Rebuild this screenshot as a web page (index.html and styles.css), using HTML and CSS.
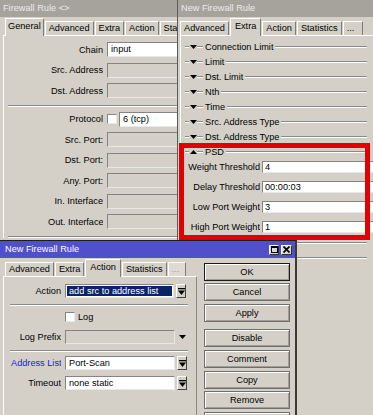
FILE: index.html
```html
<!DOCTYPE html>
<html lang="en">
<head>
    <meta charset="UTF-8">
    <meta name="viewport" content="width=device-width, initial-scale=1.0">
    <title>Firewall Rule</title>
    <link rel="stylesheet" href="styles.css">
</head>
<body>
<div class="desktop">

    <!-- Firewall Rule <> : General tab -->
    <div class="window rule-window">
        <div class="title">Firewall Rule &lt;&gt;</div>
        <div class="tabs">
            <span class="tab active">General</span>
            <span class="tab">Advanced</span>
            <span class="tab">Extra</span>
            <span class="tab">Action</span>
            <span class="tab">Statistics</span>
        </div>
        <div class="panel">
            <div class="row"><span class="label">Chain</span><span class="field white">input</span></div>
            <div class="row"><span class="label">Src. Address</span><span class="field"></span></div>
            <div class="row"><span class="label">Dst. Address</span><span class="field"></span></div>
            <div class="sep"></div>
            <div class="row"><span class="label">Protocol</span><span class="check"></span><span class="field white">6 (tcp)</span></div>
            <div class="row"><span class="label">Src. Port:</span><span class="field"></span></div>
            <div class="row"><span class="label">Dst. Port:</span><span class="field"></span></div>
            <div class="row"><span class="label">Any. Port:</span><span class="field"></span></div>
            <div class="row"><span class="label">In. Interface</span><span class="field"></span></div>
            <div class="row"><span class="label">Out. Interface</span><span class="field"></span></div>
            <div class="sep"></div>
        </div>
    </div>

    <!-- New Firewall Rule : Extra tab -->
    <div class="window extra-window">
        <div class="title">New Firewall Rule</div>
        <div class="tabs">
            <span class="tab">Advanced</span>
            <span class="tab active">Extra</span>
            <span class="tab">Action</span>
            <span class="tab">Statistics</span>
            <span class="tab more">...</span>
        </div>
        <div class="panel">
            <div class="group"><span class="dash"></span><svg class="tri" width="7" height="4" viewBox="0 0 7 4"><path d="M0 0h7L3.5 4z"/></svg><span class="dash long"></span><span class="gname">Connection Limit</span><span class="gline"></span></div>
            <div class="group"><span class="dash"></span><svg class="tri" width="7" height="4" viewBox="0 0 7 4"><path d="M0 0h7L3.5 4z"/></svg><span class="dash long"></span><span class="gname">Limit</span><span class="gline"></span></div>
            <div class="group"><span class="dash"></span><svg class="tri" width="7" height="4" viewBox="0 0 7 4"><path d="M0 0h7L3.5 4z"/></svg><span class="dash long"></span><span class="gname">Dst. Limit</span><span class="gline"></span></div>
            <div class="group"><span class="dash"></span><svg class="tri" width="7" height="4" viewBox="0 0 7 4"><path d="M0 0h7L3.5 4z"/></svg><span class="dash long"></span><span class="gname">Nth</span><span class="gline"></span></div>
            <div class="group"><span class="dash"></span><svg class="tri" width="7" height="4" viewBox="0 0 7 4"><path d="M0 0h7L3.5 4z"/></svg><span class="dash long"></span><span class="gname">Time</span><span class="gline"></span></div>
            <div class="group"><span class="dash"></span><svg class="tri" width="7" height="4" viewBox="0 0 7 4"><path d="M0 0h7L3.5 4z"/></svg><span class="dash long"></span><span class="gname">Src. Address Type</span><span class="gline"></span></div>
            <div class="group"><span class="dash"></span><svg class="tri" width="7" height="4" viewBox="0 0 7 4"><path d="M0 0h7L3.5 4z"/></svg><span class="dash long"></span><span class="gname">Dst. Address Type</span><span class="gline"></span></div>
            <div class="group"><span class="dash"></span><svg class="tri" width="7" height="4" viewBox="0 0 7 4"><path d="M0 4h7L3.5 0z"/></svg><span class="dash long"></span><span class="gname">PSD</span><span class="gline"></span></div>
            <div class="psd">
                <div class="prow"><span class="label">Weight Threshold</span><span class="field white">4</span></div>
                <div class="prow"><span class="label">Delay Threshold</span><span class="field white">00:00:03</span></div>
                <div class="prow"><span class="label">Low Port Weight</span><span class="field white">3</span></div>
                <div class="prow"><span class="label">High Port Weight</span><span class="field white">1</span></div>
            </div>
            <div class="group"><span class="dash"></span><svg class="tri" width="7" height="4" viewBox="0 0 7 4"><path d="M0 0h7L3.5 4z"/></svg><span class="dash long"></span><span class="gname">Hotspot</span><span class="gline"></span></div>
            <div class="group"><span class="dash"></span><svg class="tri" width="7" height="4" viewBox="0 0 7 4"><path d="M0 0h7L3.5 4z"/></svg><span class="dash long"></span><span class="gname">IP Fragment</span><span class="gline"></span></div>
        </div>
    </div>

    <!-- highlight around the PSD settings -->
    <div class="mark"></div>

    <!-- New Firewall Rule : Action tab -->
    <div class="window action-window">
        <div class="title">
            <span>New Firewall Rule</span>
            <span class="title-btns">
                <span class="tbtn"><svg width="7" height="7" viewBox="0 0 7 7"><rect x="0.5" y="0.5" width="6" height="6" fill="none" stroke="#000"/><rect width="7" height="2"/></svg></span>
                <span class="tbtn wide"><svg width="7" height="7" viewBox="0 0 7 7"><path d="M0.5 0.5l6 6M6.5 0.5l-6 6" stroke="#000" stroke-width="1.7"/></svg></span>
            </span>
        </div>
        <div class="wbody">
            <div class="main">
                <div class="tabs">
                    <span class="tab">Advanced</span>
                    <span class="tab">Extra</span>
                    <span class="tab active">Action</span>
                    <span class="tab">Statistics</span>
                    <span class="tab more dim">...</span>
                </div>
                <div class="panel">
                    <div class="row">
                        <span class="label">Action</span>
                        <span class="field white select"><span class="picked">add src to address list</span></span>
                        <span class="dd"><svg width="7" height="7" viewBox="0 0 7 7"><rect width="7" height="1.3"/><path d="M0 2.5h7L3.5 7z"/></svg></span>
                    </div>
                    <div class="sep"></div>
                    <div class="row"><span class="check log"></span><span class="check-label">Log</span></div>
                    <div class="row">
                        <span class="label">Log Prefix</span>
                        <span class="field"></span>
                        <svg class="open" width="7" height="4" viewBox="0 0 7 4"><path d="M0 0h7L3.5 4z"/></svg>
                    </div>
                    <div class="sep"></div>
                    <div class="row">
                        <span class="label link">Address List</span>
                        <span class="field white">Port-Scan</span>
                        <span class="dd"><svg width="7" height="7" viewBox="0 0 7 7"><rect width="7" height="1.3"/><path d="M0 2.5h7L3.5 7z"/></svg></span>
                    </div>
                    <div class="row">
                        <span class="label">Timeout</span>
                        <span class="field white">none static</span>
                        <span class="dd"><svg width="7" height="7" viewBox="0 0 7 7"><rect width="7" height="1.3"/><path d="M0 2.5h7L3.5 7z"/></svg></span>
                    </div>
                </div>
            </div>
            <div class="buttons">
                <button class="btn default">OK</button>
                <button class="btn">Cancel</button>
                <button class="btn">Apply</button>
                <button class="btn spaced">Disable</button>
                <button class="btn">Comment</button>
                <button class="btn">Copy</button>
                <button class="btn">Remove</button>
                <button class="btn">Reset Counters</button>
            </div>
        </div>
    </div>

</div>
</body>
</html>
```

FILE: styles.css
```css
* {
    box-sizing: border-box;
}
body {
    margin: 0;
    background-color: #d4d0c8;
    font-family: "Liberation Sans", Arial, sans-serif;
    font-size: 9.2px;
    color: #000;
    overflow: hidden;
}
.desktop {
    position: relative;
    width: 373px;
    height: 415px;
    overflow: hidden;
}

/* windows */
.window {
    position: absolute;
    background-color: #d4d0c8;
    overflow: hidden;
}
.rule-window {
    left: 0;
    top: 0;
    width: 177px;
    height: 241px;
}
.extra-window {
    left: 177px;
    top: 0;
    width: 200px;
    height: 415px;
    border-left: 1px solid #5c5c5c;
}
.action-window {
    left: 0;
    top: 240px;
    width: 297px;
    height: 175px;
    border-top: 1px solid #1e1e1e;
    border-right: 2px solid #3a3a3a;
    z-index: 3;
}
.title {
    height: 17px;
    line-height: 17px;
    padding-left: 3px;
    background-color: #a6a29c;
    color: #ececec;
    white-space: nowrap;
}
.action-window .title {
    display: flex;
    align-items: center;
    justify-content: space-between;
    padding: 0 3px 0 5px;
    background-color: #5050c8;
    color: #fff;
}
.title-btns {
    display: flex;
    gap: 2px;
}
.tbtn {
    display: flex;
    align-items: center;
    justify-content: center;
    width: 10px;
    height: 10px;
    background-color: #dcd9d2;
    border: 1px solid;
    border-color: #fff #303030 #303030 #fff;
}
.tbtn.wide {
    width: 11px;
}

/* tabs */
.tabs {
    display: flex;
    align-items: flex-end;
    height: 18px;
    padding-left: 5px;
}
.extra-window .tabs {
    padding-left: 2px;
}
.tab {
    height: 14px;
    line-height: 12px;
    padding: 0 3px;
    margin-right: 1px;
    border: 1px solid;
    border-color: #fff #7c7c7c transparent #fff;
    border-bottom: 0;
    white-space: nowrap;
    flex: none;
}
.tab.active {
    position: relative;
    z-index: 1;
    height: 18px;
    line-height: 15px;
    padding: 0 4px;
    margin-bottom: -1px;
    background-color: #d4d0c8;
}
.rule-window .tab.active {
    padding: 0 2px;
}
.tab.more {
    min-width: 20px;
}
.tab.dim {
    min-width: 18px;
    color: #a09c96;
    background-color: #dedad4;
}

/* panels */
.panel {
    margin-left: 3px;
    border-top: 1px solid #fff;
    border-left: 1px solid #fff;
}
.rule-window .panel {
    padding-top: 3.25px;
}
.extra-window .panel {
    margin-left: 2px;
    padding: 3px 10px 0 4px;
}
.row {
    display: flex;
    align-items: center;
    height: 20.5px;
}
.label {
    flex: none;
    text-align: right;
    white-space: nowrap;
    overflow: hidden;
}
.rule-window .label {
    width: 55px;
    margin: 0 4px 0 44px;
}
.field {
    flex: none;
    width: 110px;
    height: 15px;
    line-height: 13px;
    padding-left: 3px;
    background-color: #d4d0c8;
    border: 1px solid;
    border-color: #848484 #e8e8e8 #e8e8e8 #848484;
    white-space: nowrap;
    overflow: hidden;
}
.field.white {
    background-color: #fff;
}
.check {
    flex: none;
    width: 10px;
    height: 10px;
    margin-right: 2px;
    background-color: #fff;
    border: 1px solid;
    border-color: #848484 #e8e8e8 #e8e8e8 #848484;
}
.sep {
    height: 2px;
    margin: 4px 0 2px 4px;
    border-top: 1px solid #8a8a8a;
    border-bottom: 1px solid #fff;
}

/* collapsible groups on the Extra tab */
.group {
    display: flex;
    align-items: center;
    height: 15px;
}
.dash,
.gline {
    height: 2px;
    border-top: 1px solid #8a8a8a;
    border-bottom: 1px solid #fff;
}
.dash {
    width: 4px;
    margin-right: 1px;
}
.dash.long {
    width: 6px;
    margin: 0 2px 0 0;
}
.tri {
    flex: none;
}
.gname {
    white-space: nowrap;
}
.gline {
    flex: 1;
    margin-left: 2px;
}
.psd {
    margin-bottom: -4px;
}
.prow {
    display: flex;
    align-items: flex-start;
    height: 20px;
}
.prow .label {
    width: 72px;
    margin: 2px 2px 0 3px;
    line-height: 12px;
}
.prow .field {
    width: 120px;
    height: 12px;
    line-height: 10px;
    margin-top: 2px;
    padding-left: 2px;
}

/* red highlight */
.mark {
    position: absolute;
    left: 179px;
    top: 143px;
    width: 191px;
    height: 97px;
    border: 5px solid #e30000;
    z-index: 2;
}

/* Action window */
.wbody {
    display: flex;
}
.main {
    width: 197px;
    flex: none;
}
.action-window .panel {
    width: 194px;
    height: 150px;
    padding-top: 4px;
    border-right: 1px solid #8a8a8a;
}
.action-window .row {
    height: 20px;
}
.action-window .label {
    width: 50px;
    margin: 0 4px 0 7px;
}
.action-window .field {
    height: 14px;
    line-height: 12px;
}
.action-window .sep {
    margin: 3px 8px 1px 6px;
}
.label.link {
    color: #2020e0;
}
.select {
    width: 109px;
    padding: 1px;
}
.picked {
    display: block;
    height: 10px;
    line-height: 10px;
    padding-left: 2px;
    background-color: #0a246a;
    color: #fff;
}
.dd {
    display: flex;
    align-items: center;
    justify-content: center;
    flex: none;
    width: 10px;
    height: 14px;
    margin-left: 2px;
    border: 1px solid;
    border-color: #fff #404040 #404040 #fff;
}
.check.log {
    margin-left: 61px;
}
.check-label {
    margin-left: 1px;
}
.open {
    margin-left: 4px;
}
.buttons {
    display: flex;
    flex-direction: column;
    gap: 2.7px;
    width: 86px;
    margin-left: 7px;
    padding-top: 4.7px;
}
.btn {
    height: 18px;
    padding: 0;
    font-family: inherit;
    font-size: 9.2px;
    color: #000;
    background-color: #d4d0c8;
    border: 1px solid #6e6e6e;
    box-shadow: inset 1px 1px #fff, inset -1px -1px #a19d96;
}
.btn.default {
    border-color: #1a1a1a;
}
.btn.spaced {
    margin-top: 4.5px;
}
```
